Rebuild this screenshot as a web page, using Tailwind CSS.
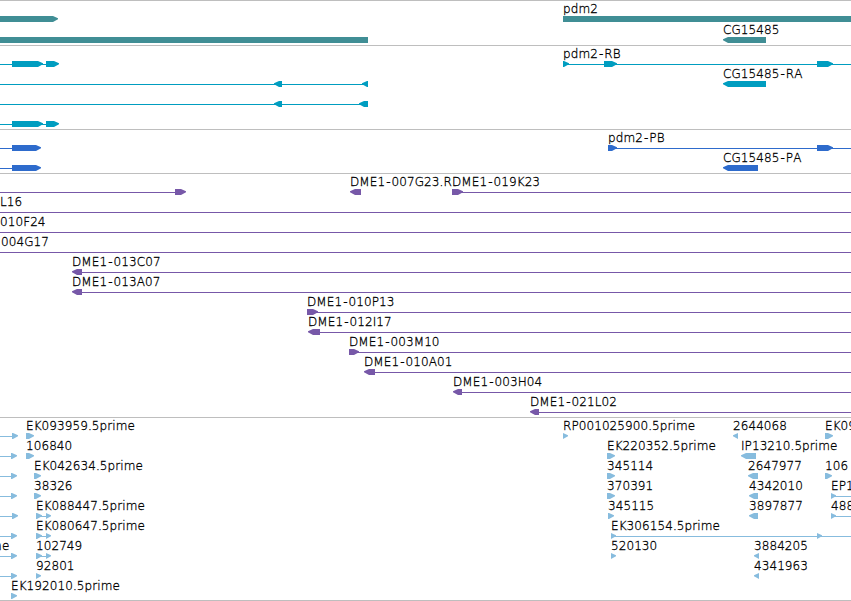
<!DOCTYPE html>
<html lang="en">
<head>
    <meta charset="UTF-8">
    <meta name="viewport" content="width=device-width, initial-scale=1.0">
    <title>Genome Browser - pdm2</title>
    <script src="https://cdn.jsdelivr.net/npm/@tailwindcss/browser@4"></script>
</head>
<body class="bg-white text-black overflow-hidden">

    <main id="tracks" class="w-[851px] h-[601px] overflow-hidden flex flex-col border-b border-[#bebebe] font-['DejaVu_Sans_Light','DejaVu_Sans',sans-serif] text-[12px] leading-[14px] tracking-[0.08px] [font-kerning:none] [-webkit-text-stroke:0.3px_black]"></main>

    <script>
        // bars: [start, end, direction]  (1 = forward, -1 = reverse, 0 = no arrow head)
        // lines: [start, end]            labels: [x, text]
        const W = 851;

        const leftRead = (end) => ({ lines: [[0, end - 2]], bars: [[end - 6, end, 1]] });

        const tracks = [
            {
                name: 'Genes', color: 'text-[#408e95]', row: 'h-[21px]', pad: 'pb-[2px]',
                rows: [
                    { bars: [[0, 58, 1], [563, W, 0]], labels: [[563, 'pdm2']] },
                    { bars: [[0, 368, 0], [723, 766, -1]], labels: [[723, 'CG15485']] },
                ]
            },
            {
                name: 'Transcripts', color: 'text-[#009dc0]', row: 'h-5', pad: 'pb-[3px]',
                rows: [
                    { lines: [[0, 58], [563, W]], bars: [[12, 43, 1], [46, 59, 1], [563, 569, 1], [604, 617, 1], [817, 833, 1]], labels: [[563, 'pdm2-RB']] },
                    { lines: [[0, 368]], bars: [[274, 282, -1], [362, 368, -1], [723, 766, -1]], labels: [[723, 'CG15485-RA']] },
                    { lines: [[0, 368]], bars: [[274, 282, -1], [359, 368, -1]] },
                    { lines: [[0, 58]], bars: [[12, 43, 1], [46, 59, 1]] },
                ]
            },
            {
                name: 'CDS', color: 'text-[#2e6bcc]', row: 'h-5', pad: 'pb-[3px]',
                rows: [
                    { lines: [[0, 39], [608, W]], bars: [[12, 41, 1], [608, 617, 1], [817, 833, 1]], labels: [[608, 'pdm2-PB']] },
                    { lines: [[0, 39]], bars: [[12, 41, 1], [723, 758, -1]], labels: [[723, 'CG15485-PA']] },
                ]
            },
            {
                name: 'BACs', color: 'text-[#7758a8]', row: 'h-5', pad: 'pb-[3px]',
                rows: [
                    { lines: [[0, 184], [452, W]], bars: [[175, 186, 1], [350, 361, -1], [452, 463, 1]], labels: [[350, 'DME1-007G23.R'], [452, 'DME1-019K23']] },
                    { lines: [[0, W]], labels: [[0, 'L16']] },
                    { lines: [[0, W]], labels: [[0, '010F24']] },
                    { lines: [[0, W]], labels: [[1, '004G17']] },
                    { lines: [[74, W]], bars: [[72, 82, -1]], labels: [[72, 'DME1-013C07']] },
                    { lines: [[74, W]], bars: [[72, 82, -1]], labels: [[72, 'DME1-013A07']] },
                    { lines: [[307, W]], bars: [[307, 318, 1]], labels: [[307, 'DME1-010P13']] },
                    { lines: [[310, W]], bars: [[308, 320, -1]], labels: [[308, 'DME1-012I17']] },
                    { lines: [[349, W]], bars: [[349, 359, 1]], labels: [[349, 'DME1-003M10']] },
                    { lines: [[366, W]], bars: [[364, 375, -1]], labels: [[364, 'DME1-010A01']] },
                    { lines: [[455, W]], bars: [[453, 462, -1]], labels: [[453, 'DME1-003H04']] },
                    { lines: [[532, W]], bars: [[530, 539, -1]], labels: [[530, 'DME1-021L02']] },
                ]
            },
            {
                name: 'ESTs', color: 'text-[#87bcde]', row: 'h-5', pad: 'pb-[2px]',
                rows: [
                    { read: 18, bars: [[26, 34, 1], [563, 568, 1], [733, 738, -1], [825, 833, 1]], labels: [[26, 'EK093959.5prime'], [563, 'RP001025900.5prime'], [733, '2644068'], [825, 'EK094']] },
                    { read: 17, bars: [[26, 34, 1], [607, 615, 1], [741, 756, -1]], labels: [[26, '106840'], [607, 'EK220352.5prime'], [741, 'IP13210.5prime']] },
                    { read: 17, bars: [[34, 41, 1], [607, 615, 1], [748, 758, -1], [825, 832, 1]], labels: [[34, 'EK042634.5prime'], [607, '345114'], [748, '2647977'], [825, '106']] },
                    { read: 17, lines: [[831, W]], bars: [[34, 41, 1], [607, 615, 1], [749, 758, -1], [831, 836, 1]], labels: [[34, '38326'], [607, '370391'], [749, '4342010'], [831, 'EP1']] },
                    { read: 18, lines: [[36, 49], [831, W]], bars: [[36, 42, 1], [46, 51, 1], [608, 614, 1], [749, 758, -1], [831, 836, 1]], labels: [[36, 'EK088447.5prime'], [608, '345115'], [749, '3897877'], [831, '488']] },
                    { read: 17, lines: [[36, 49], [611, W]], bars: [[36, 42, 1], [46, 51, 1], [611, 616, 1], [817, 822, 1]], labels: [[36, 'EK080647.5prime'], [611, 'EK306154.5prime']] },
                    { read: 17, lines: [[36, 49]], bars: [[36, 42, 1], [46, 51, 1], [611, 616, 1], [754, 759, -1]], labels: [[-26, 'prime'], [36, '102749'], [611, '520130'], [754, '3884205']] },
                    { read: 17, bars: [[36, 41, 1], [754, 759, -1]], labels: [[36, '92801'], [754, '4341963']] },
                    { bars: [[11, 17, 1]], labels: [[11, 'EK192010.5prime']] },
                ]
            },
        ];

        function barShape([a, b, dir]) {
            const head = Math.min(5, b - a);
            if (dir > 0) return `<polygon points="${a},0 ${b - head},0 ${b},2.3 ${b},3.2 ${b - head},6 ${a},6"/>`;
            if (dir < 0) return `<polygon points="${b},0 ${a + head},0 ${a},2.3 ${a},3.2 ${a + head},6 ${b},6"/>`;
            return `<rect x="${a}" y="0" width="${b - a}" height="6"/>`;
        }

        function lineShape([a, b]) {
            return `<rect x="${a}" y="3" width="${b - a}" height="1"/>`;
        }

        // hyphens get a little air on both sides
        const labelText = (text) => text.replace('-', '<span class="px-[1px]">-</span>');

        function renderRow(track, row) {
            const read = row.read ? leftRead(row.read) : { lines: [], bars: [] };
            const lines = [...read.lines, ...(row.lines || [])].map(lineShape).join('');
            const bars = [...read.bars, ...(row.bars || [])].map(barShape).join('');
            const labels = (row.labels || []).map(([x, text]) =>
                `<span class="absolute top-px whitespace-nowrap" style="left:${x}px">${labelText(text)}</span>`).join('');
            return `<div class="flex flex-col ${track.row}">
                <div class="relative h-[15px] shrink-0">${labels}</div>
                <svg class="block h-[6px] w-[851px] shrink-0 fill-current ${track.color}">${lines}${bars}</svg>
            </div>`;
        }

        document.getElementById('tracks').innerHTML = tracks.map(track =>
            `<section aria-label="${track.name}" class="border-t border-[#bebebe] ${track.pad}">
                ${track.rows.map(row => renderRow(track, row)).join('')}
            </section>`).join('');
    </script>

</body>
</html>
